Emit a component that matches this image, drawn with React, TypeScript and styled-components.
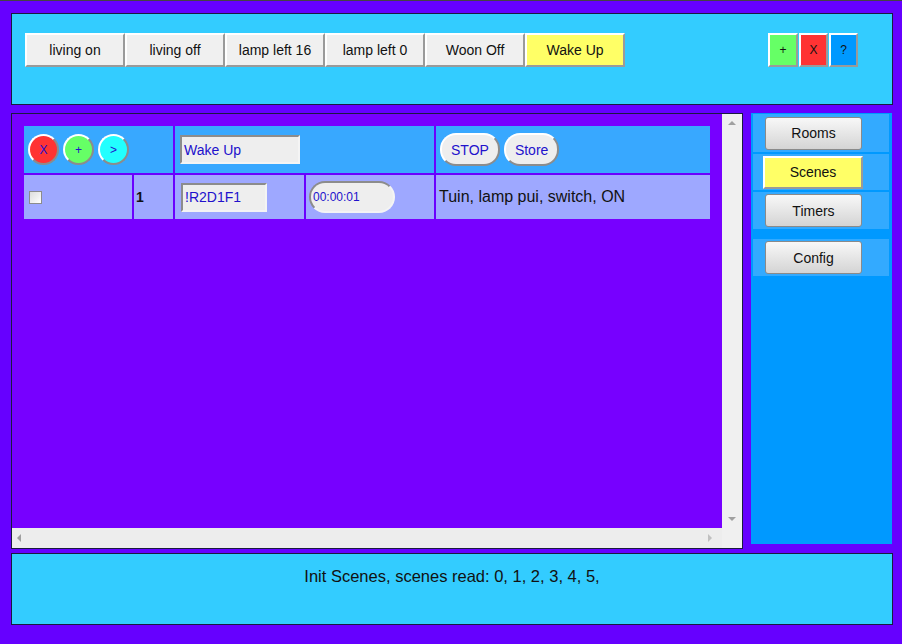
import styled, { createGlobalStyle } from "styled-components";

const GlobalStyle = createGlobalStyle`
  html, body {
    margin: 0;
    padding: 0;
    background: #6600ff;
  }
  body {
    font-family: "Liberation Sans", Arial, sans-serif;
  }
`;

const Page = styled.div`
  width: 902px;
  height: 644px;
  box-sizing: border-box;
  padding: 12px 9px 0 11px;
  display: flex;
  flex-direction: column;
  background: #6600ff;
  border-top: 1px solid #444;
`;

const Panel = styled.div`
  background: #33ccff;
  border: 1px solid #1a1a40;
  box-sizing: border-box;
`;

const TopBar = styled(Panel)`
  height: 92px;
  flex-shrink: 0;
  display: flex;
  justify-content: space-between;
  align-items: flex-start;
  padding: 19px 34px 0 13px;
`;

const ButtonRow = styled.div<{ gap?: number }>`
  display: flex;
  gap: ${(p) => p.gap ?? 0}px;
`;

const FlatButton = styled.button<{ bg?: string; w?: number }>`
  width: ${(p) => p.w ?? 100}px;
  height: 34px;
  box-sizing: border-box;
  background: ${(p) => p.bg ?? "#f0f0f0"};
  border: 2px solid;
  border-color: #ffffff #9a9a9a #9a9a9a #ffffff;
  font-family: "Liberation Sans", Arial, sans-serif;
  font-size: ${(p) => ((p.w ?? 100) < 50 ? 12 : 14)}px;
  color: #111;
  padding: 0;
`;

const Middle = styled.div`
  display: flex;
  gap: 8px;
  align-items: flex-start;
  margin-top: 8px;
  flex-shrink: 0;
`;

const ScrollPane = styled.div`
  width: 732px;
  height: 436px;
  box-sizing: border-box;
  border: 1px solid #1a1a40;
  display: grid;
  grid-template-columns: 1fr 20px;
  grid-template-rows: 1fr 20px;
  background: #f0f0f0;
`;

const Content = styled.div`
  background: #7700ff;
  padding: 12px;
`;

const VScroll = styled.div`
  background: #f0f0f0;
  display: flex;
  flex-direction: column;
  justify-content: space-between;
  align-items: center;
  padding: 7px 0;
`;

const HScroll = styled.div`
  background: #ededed;
  display: flex;
  justify-content: space-between;
  align-items: center;
  padding: 0 10px 0 5px;
`;

const Corner = styled.div`
  background: #f0f0f0;
`;

const Arrow = styled.span<{ dir: "up" | "down" | "left" | "right" }>`
  width: 0;
  height: 0;
  border: 4px solid transparent;
  ${(p) =>
    p.dir === "up"
      ? "border-bottom: 4px solid #a0a0a0; border-top-width: 0;"
      : p.dir === "down"
      ? "border-top: 4px solid #a0a0a0; border-bottom-width: 0;"
      : p.dir === "left"
      ? "border-right: 4px solid #a0a0a0; border-left-width: 0;"
      : "border-left: 4px solid #c0c0c0; border-right-width: 0;"}
`;

const Table = styled.div`
  display: grid;
  grid-template-columns: 108px 39px 129px 128px 274px;
  grid-template-rows: 47px 44px;
  gap: 2px;
  background: #6a00ff;
  width: 686px;
`;

const Cell = styled.div<{ head?: boolean; span?: number; pl?: number }>`
  background: ${(p) => (p.head ? "#38a8ff" : "#9ea8ff")};
  grid-column: span ${(p) => p.span ?? 1};
  display: flex;
  align-items: center;
  gap: 4px;
  padding-left: ${(p) => p.pl ?? (p.head ? 4 : 5)}px;
  font-size: 15px;
  color: #111;
`;

const RoundButton = styled.button<{ bg: string }>`
  width: 31px;
  height: 31px;
  border-radius: 50%;
  background: ${(p) => p.bg};
  border: 2px solid;
  border-color: #ffffff #8c8c8c #8c8c8c #ffffff;
  color: #2211cc;
  font-family: "Liberation Sans", Arial, sans-serif;
  font-size: 12px;
  padding: 0;
`;

const TextBox = styled.div<{ w: number }>`
  width: ${(p) => p.w}px;
  height: 29px;
  box-sizing: border-box;
  background: #eeeeee;
  border: 2px solid;
  border-color: #8c8c8c #f4f4f4 #f4f4f4 #8c8c8c;
  color: #2211cc;
  font-size: 14px;
  display: flex;
  align-items: center;
  padding-left: 2px;
  margin-left: 1px;
`;

const TimeBox = styled.div`
  width: 86px;
  height: 32px;
  box-sizing: border-box;
  background: #eeeeee;
  border-radius: 16px;
  border: 2px solid;
  border-color: #8c8c8c #f4f4f4 #f4f4f4 #8c8c8c;
  color: #2211cc;
  font-size: 12px;
  display: flex;
  align-items: center;
  padding-left: 2px;
`;

const Pill = styled.button`
  height: 33px;
  border-radius: 16px;
  background: #eeeeee;
  border: 2px solid;
  border-color: #ffffff #8c8c8c #8c8c8c #ffffff;
  color: #2211cc;
  font-family: "Liberation Sans", Arial, sans-serif;
  font-size: 14px;
  padding: 0 9px;
`;

const CheckBox = styled.span`
  width: 13px;
  height: 13px;
  box-sizing: border-box;
  border: 1px solid #8c8c8c;
  background: linear-gradient(135deg, #dcdcdc, #ffffff);
`;

const Number = styled.b`
  font-size: 14px;
`;

const Desc = styled.span`
  font-size: 16px;
  color: #111;
  margin-left: -2px;
`;

const Sidebar = styled.div`
  width: 141px;
  height: 431px;
  box-sizing: border-box;
  background: #0099ff;
  padding: 1px 3px 0 2px;
  display: flex;
  flex-direction: column;
  gap: 2px;
`;

const SideItem = styled.div<{ h: number; mt?: number }>`
  height: ${(p) => p.h}px;
  background: #33aaff;
  display: flex;
  align-items: center;
  padding-left: 12px;
  margin-top: ${(p) => p.mt ?? 0}px;
`;

const SideButton = styled.button`
  width: 97px;
  height: 33px;
  border-radius: 3px;
  border: 1px solid #8a8a8a;
  background: linear-gradient(#f8f8f8, #d4d4d4);
  font-family: "Liberation Sans", Arial, sans-serif;
  font-size: 14px;
  color: #111;
  padding: 0;
`;

const SideActive = styled.button`
  width: 100px;
  height: 33px;
  margin-left: -2px;
  background: #ffff66;
  border: 2px solid;
  border-color: #ffffff #9a9a9a #9a9a9a #ffffff;
  font-family: "Liberation Sans", Arial, sans-serif;
  font-size: 14px;
  color: #111;
  padding: 0;
`;

const Footer = styled(Panel)`
  height: 72px;
  flex-shrink: 0;
  margin-top: 4px;
  text-align: center;
  padding-top: 13px;
  font-size: 16.5px;
  color: #111;
`;

const scenes = ["living on", "living off", "lamp left 16", "lamp left 0", "Woon Off"];

export default function App() {
  return (
    <>
      <GlobalStyle />
      <Page>
        <TopBar>
          <ButtonRow>
            {scenes.map((s) => (
              <FlatButton key={s}>{s}</FlatButton>
            ))}
            <FlatButton bg="#ffff66">Wake Up</FlatButton>
          </ButtonRow>
          <ButtonRow gap={1}>
            <FlatButton w={30} bg="#66ff66">+</FlatButton>
            <FlatButton w={29} bg="#ff3333">X</FlatButton>
            <FlatButton w={29} bg="#0099ff">?</FlatButton>
          </ButtonRow>
        </TopBar>

        <Middle>
          <ScrollPane>
            <Content>
              <Table>
                <Cell head span={2}>
                  <RoundButton bg="#ff3333">X</RoundButton>
                  <RoundButton bg="#66ff66">+</RoundButton>
                  <RoundButton bg="#22ffff">&gt;</RoundButton>
                </Cell>
                <Cell head span={2}>
                  <TextBox w={120}>Wake Up</TextBox>
                </Cell>
                <Cell head>
                  <Pill>STOP</Pill>
                  <Pill>Store</Pill>
                </Cell>

                <Cell>
                  <CheckBox />
                </Cell>
                <Cell pl={2}>
                  <Number>1</Number>
                </Cell>
                <Cell>
                  <TextBox w={86}>!R2D1F1</TextBox>
                </Cell>
                <Cell pl={3}>
                  <TimeBox>00:00:01</TimeBox>
                </Cell>
                <Cell>
                  <Desc>Tuin, lamp pui, switch, ON</Desc>
                </Cell>
              </Table>
            </Content>
            <VScroll>
              <Arrow dir="up" />
              <Arrow dir="down" />
            </VScroll>
            <HScroll>
              <Arrow dir="left" />
              <Arrow dir="right" />
            </HScroll>
            <Corner />
          </ScrollPane>

          <Sidebar>
            <SideItem h={38}>
              <SideButton>Rooms</SideButton>
            </SideItem>
            <SideItem h={36}>
              <SideActive>Scenes</SideActive>
            </SideItem>
            <SideItem h={37}>
              <SideButton>Timers</SideButton>
            </SideItem>
            <SideItem h={37} mt={8}>
              <SideButton>Config</SideButton>
            </SideItem>
          </Sidebar>
        </Middle>

        <Footer>Init Scenes, scenes read: 0, 1, 2, 3, 4, 5,</Footer>
      </Page>
    </>
  );
}
